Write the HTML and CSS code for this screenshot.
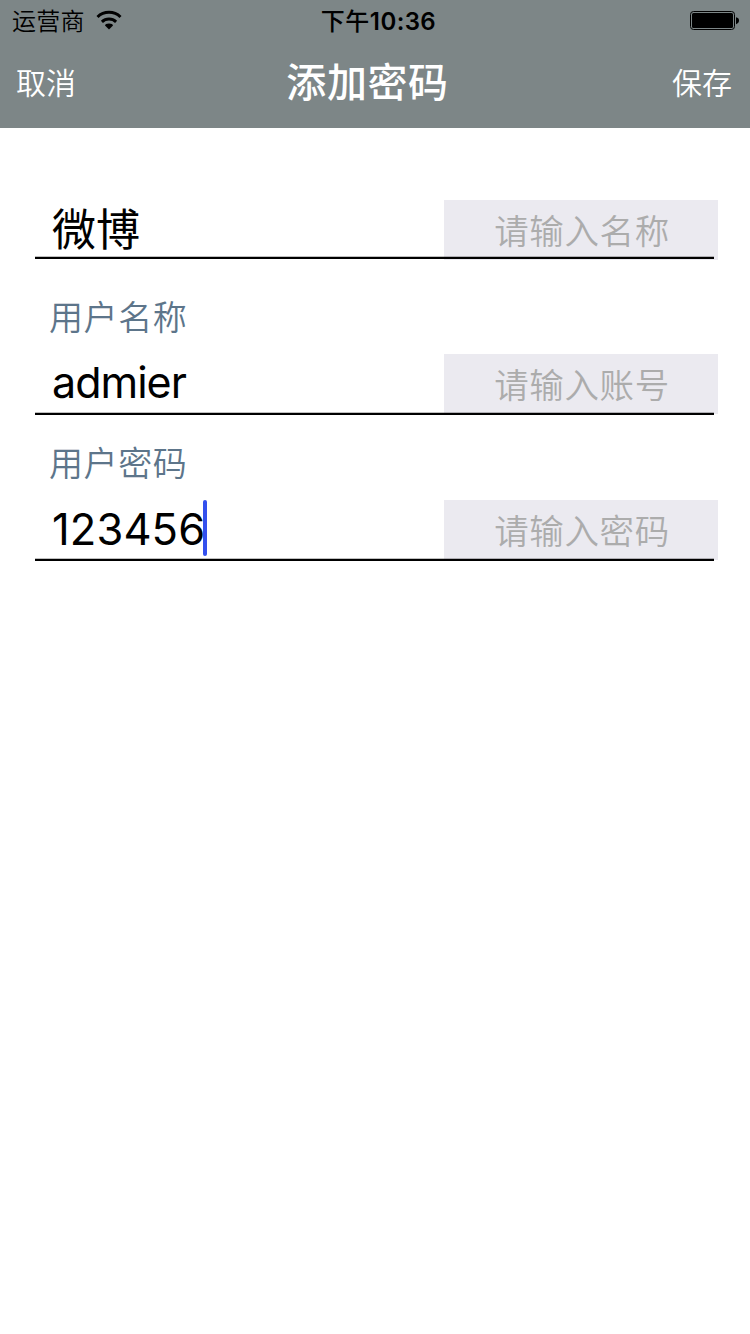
FILE: index.html
```html
<!DOCTYPE html>
<html lang="zh-CN">
<head>
<meta charset="utf-8">
<title>添加密码</title>
<link rel="stylesheet" href="styles.css">
</head>
<body>
<header class="header">
  <div class="status">
    <div class="status-left">
      <span class="carrier">运营商</span>
      <svg class="wifi" width="26" height="20" viewBox="0 0 26 20">
        <path d="M1.5 7A16.6 16.6 0 0 1 24.5 7" fill="none" stroke="#000" stroke-width="3"/>
        <path d="M5.9 11.9A10.4 10.4 0 0 1 20.1 11.9" fill="none" stroke="#000" stroke-width="3"/>
        <path d="M13 19.4L9 15.4Q9.2 13.4 13 13.4T17 15.4Z"/>
      </svg>
    </div>
    <div class="clock"><span class="period">下午</span><span class="time">10:36</span></div>
    <div class="status-right">
      <svg class="battery" width="50" height="20" viewBox="0 0 50 20">
        <rect x=".5" y=".5" width="44" height="18" rx="3" fill="none" stroke="#000"/>
        <rect x="2" y="2" width="41" height="15" rx="1.5"/>
        <path d="M46 6.2q3 .5 3 3.4t-3 3.6Z"/>
      </svg>
    </div>
  </div>
  <nav class="nav">
    <a class="action">取消</a>
    <h1 class="title">添加密码</h1>
    <a class="action action-save">保存</a>
  </nav>
</header>
<main class="form">
  <div class="row">
    <div class="value">微博</div>
    <div class="hint">请输入名称</div>
  </div>
  <div class="label label-name">用户名称</div>
  <div class="row">
    <div class="value value-user">admier</div>
    <div class="hint">请输入账号</div>
  </div>
  <div class="label">用户密码</div>
  <div class="row">
    <div class="value value-pass">123456</div><i class="caret"></i>
    <div class="hint">请输入密码</div>
  </div>
</main>
</body>
</html>
```
FILE: styles.css
```css
* { box-sizing: border-box; }
body {
  margin: 0;
  height: 1334px;
  background: #fff;
  color: #000;
  font-family: Inter, "Noto Sans CJK SC", sans-serif;
}
.header { height: 128px; background: #7d8687; }
.status {
  height: 40px;
  display: grid;
  grid-template-columns: 1fr auto 1fr;
  align-items: center;
  padding: 4px 10px 0 12px;
}
.status-left { display: flex; align-items: center; gap: 11px; }
.wifi { margin-bottom: 4px; }
.carrier { font-size: 24px; line-height: 36px; letter-spacing: .3px; font-weight: 350; }
.clock { display: flex; align-items: center; line-height: 36px; padding-left: 5px; }
.period { font-size: 24px; font-weight: 500; letter-spacing: .5px; }
.time { font-size: 24px; font-weight: 600; letter-spacing: .4px; }
.status-right { display: flex; justify-content: flex-end; padding-bottom: 2px; }
.nav {
  height: 88px;
  display: grid;
  grid-template-columns: 1fr auto 1fr;
  align-items: center;
  padding: 0 18px 6px 16px;
  color: #fff;
}
.action { font-size: 30px; font-weight: 350; }
.action-save { text-align: right; }
.title { margin: 0; padding: 0 13px 2px 0; font-size: 40px; font-weight: 500; letter-spacing: .6px; }
.form { padding: 72px 32px 0 35px; }
.row {
  position: relative;
  height: 60px;
  display: flex;
  align-items: center;
  padding-left: 17px;
}
.row::after {
  content: "";
  position: absolute;
  left: 0;
  right: 4px;
  top: 57px;
  height: 2px;
  background: #000;
  box-shadow: 0 -1px rgba(0, 0, 0, .25);
}
.row ~ .row::after { top: 59px; }
.value { font-size: 44px; line-height: 60px; }
.value-user { font-size: 43px; letter-spacing: -1px; padding-bottom: 4px; }
.value-pass { font-size: 43.5px; letter-spacing: .1px; padding-bottom: 3px; }
.caret { width: 4px; height: 56px; margin: 0 0 4px -2px; border-radius: 2px; background: #3350ee; }
.hint {
  width: 274px;
  height: 60px;
  margin-left: auto;
  padding: 1px 0 0 2px;
  background: #ebeaf0;
  color: #acacac;
  font-size: 34.5px;
  line-height: 61px;
  letter-spacing: .6px;
  font-weight: 350;
  text-align: center;
}
.label {
  height: 86px;
  padding: 22px 0 0 14px;
  color: #5d758a;
  font-size: 34px;
  line-height: 56px;
  letter-spacing: .6px;
  font-weight: 350;
}
.label-name { height: 94px; padding-top: 30px; }
```
